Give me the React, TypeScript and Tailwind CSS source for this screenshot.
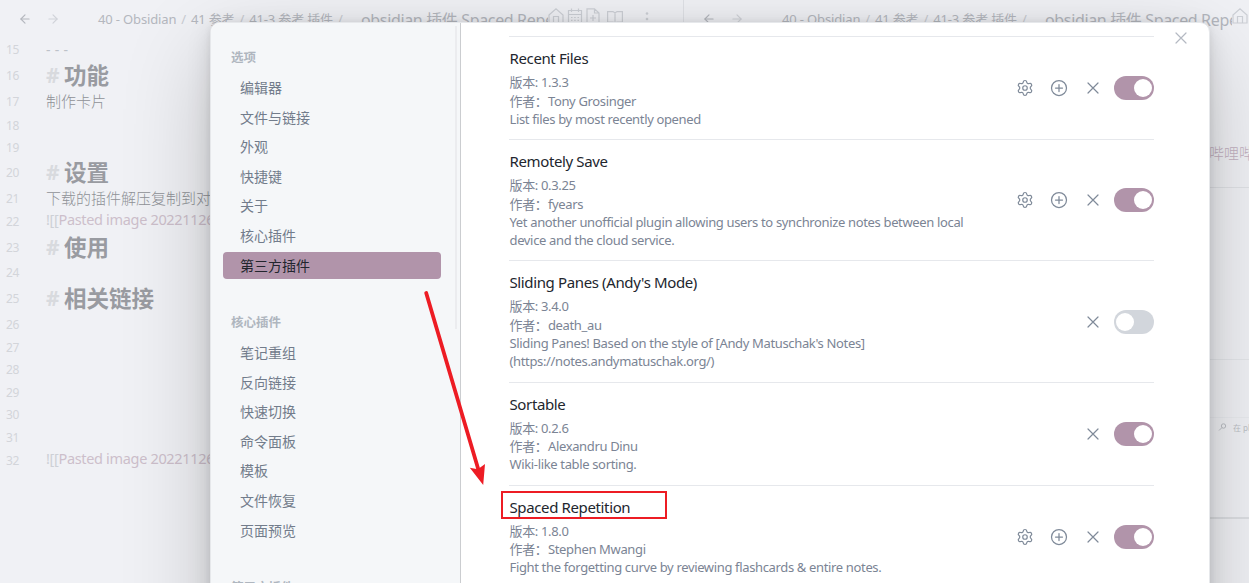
import React from "react";
import { ArrowLeft, ArrowRight, Settings } from "lucide-react";

type Line = { no: number; h: string; kind?: "dash" | "heading" | "text" | "embed"; text?: string };

const lines: Line[] = [
  { no: 15, h: "h-[26px]", kind: "dash", text: "---" },
  { no: 16, h: "h-[26px]", kind: "heading", text: "功能" },
  { no: 17, h: "h-[24px]", kind: "text", text: "制作卡片" },
  { no: 18, h: "h-[22px]" },
  { no: 19, h: "h-[25px]" },
  { no: 20, h: "h-[26px]", kind: "heading", text: "设置" },
  { no: 21, h: "h-[23px]", kind: "text", text: "下载的插件解压复制到对" },
  { no: 22, h: "h-[26px]", kind: "embed", text: "Pasted image 20221126" },
  { no: 23, h: "h-[25px]", kind: "heading", text: "使用" },
  { no: 24, h: "h-[26px]" },
  { no: 25, h: "h-[26px]", kind: "heading", text: "相关链接" },
  { no: 26, h: "h-[23px]" },
  { no: 27, h: "h-[22px]" },
  { no: 28, h: "h-[23px]" },
  { no: 29, h: "h-[22px]" },
  { no: 30, h: "h-[23px]" },
  { no: 31, h: "h-[23px]" },
  { no: 32, h: "h-[23px]", kind: "embed", text: "Pasted image 20221126" },
];

const HomeIcon = () => (
  <svg className="h-4 w-4 shrink-0" viewBox="0 0 16 16" fill="none" stroke="currentColor" strokeWidth="1.2">
    <path d="M1 7 8 .8 15 7v8H1zM5.5 15V8.5h5V15" />
  </svg>
);
const CalendarIcon = () => (
  <svg className="h-4 w-4 shrink-0" viewBox="0 0 16 16" fill="none" stroke="currentColor" strokeWidth="1.2">
    <path d="M1.5 2.5h13V15h-13zM1.5 6.5h13M4.5.5v3.500M11.500.5v3.500M4 9.500h1.500M7.200 9.500h1.500M10.500 9.500H12M4 12.300h1.500M7.200 12.300h1.500M10.500 12.300H12" />
  </svg>
);
const FilePlusIcon = () => (
  <svg className="h-4 w-4 shrink-0" viewBox="0 0 16 16" fill="none" stroke="currentColor" strokeWidth="1.2">
    <path d="M2 .8h7.500L14 5v10H2zM9.500.8V5H14M8 7v6M5 10h6" />
  </svg>
);
const BookIcon = () => (
  <svg className="h-4 w-4 shrink-0" viewBox="0 0 16 16" fill="none" stroke="currentColor" strokeWidth="1.2">
    <path d="M.6 3.600h5.400l2 1.400 2-1.400h5.400V14H10l-2 1-2-1H.6zM8 5v10" />
  </svg>
);
const DotsIcon = () => (
  <svg className="h-4 w-4 shrink-0" viewBox="0 0 16 16" fill="currentColor">
    <circle cx="8" cy="5.500" r="1.300" />
    <circle cx="8" cy="11" r="1.300" />
  </svg>
);
const Cross = () => (
  <svg className="h-4 w-4" viewBox="0 0 16 16" fill="none" stroke="currentColor" strokeWidth="1.2" strokeLinecap="round">
    <path d="m3 3 10 10M13 3 3 13" />
  </svg>
);
const PlusCircle = () => (
  <svg className="h-[18px] w-[18px]" viewBox="0 0 18 18" fill="none" stroke="currentColor" strokeWidth="1.25" strokeLinecap="round">
    <circle cx="9" cy="9" r="7.500" />
    <path d="M9 5.500v7M5.500 9h7" />
  </svg>
);

function PaneHeader({ full }: { full?: boolean }) {
  return (
    <div className="flex h-[38px] w-full items-center overflow-hidden text-[#b4b7be]">
      <ArrowLeft className="ml-[18px] h-[14px] w-[14px] shrink-0" strokeWidth={2} />
      <ArrowRight className="ml-[14px] h-[14px] w-[14px] shrink-0 text-[#d0d3d9]" strokeWidth={2} />
      <div className="ml-[38px] flex w-[263px] shrink-0 items-center gap-[5px] whitespace-nowrap pt-px text-[13px] tracking-[-0.15px]">
        <span>40 - Obsidian</span>
        <span className="text-[#c9ccd2]">/</span>
        <span>41 参考</span>
        <span className="text-[#c9ccd2]">/</span>
        <span>41-3 参考 插件</span>
        <span className="text-[#c9ccd2]">/</span>
      </div>
      <div className="w-[187px] shrink-0 overflow-hidden whitespace-nowrap pt-[2px] text-[16px] tracking-[-0.35px]">
        obsidian 插件 Spaced Repetition
      </div>
      <div className="flex shrink-0 items-center gap-[2.500px] pb-[6px] text-[#cdd0d6]">
        <HomeIcon />
        {full && (
          <>
            <CalendarIcon />
            <FilePlusIcon />
            <span className="w-[1px]" />
            <BookIcon />
            <span className="w-[11px]" />
            <DotsIcon />
          </>
        )}
      </div>
    </div>
  );
}

function EditorLine({ line }: { line: Line }) {
  return (
    <div className={`flex items-start ${line.h}`}>
      <div className="flex h-[23px] w-[46px] shrink-0 items-center pl-[6px] text-[12px] tracking-[-0.3px] text-[#d3d5da]">{line.no}</div>
      <div className="flex h-[22px] items-center whitespace-nowrap">
        {line.kind === "dash" && <span className="text-[14px] tracking-[4.200px] text-[#bdc2c9]">{line.text}</span>}
        {line.kind === "heading" && (
          <span className="flex items-center gap-[5px] pt-[2px] text-[22.500px] font-bold text-[#999ba1]">
            <span className="w-[13px] text-[21px] text-[#d8dade]">#</span>
            {line.text}
          </span>
        )}
        {line.kind === "text" && <span className="text-[15px] font-light text-[#8f9197]">{line.text}</span>}
        {line.kind === "embed" && (
          <span className="pb-[2px] text-[14.500px] tracking-[-0.330px] text-[#cdbfcb]">
            <span className="text-[#cdd0d6]">![[</span>
            {line.text}
          </span>
        )}
      </div>
    </div>
  );
}

const groups = [
  { title: "选项", items: ["编辑器", "文件与链接", "外观", "快捷键", "关于", "核心插件", "第三方插件"] },
  { title: "核心插件", items: ["笔记重组", "反向链接", "快速切换", "命令面板", "模板", "文件恢复", "页面预览"] },
  { title: "第三方插件", items: [] },
];

type Plugin = { name: string; version: string; author: string; desc: string[]; on: boolean; options: boolean; h: string; gap: string; marked?: boolean };

const plugins: Plugin[] = [
  { name: "Recent Files", version: "1.3.3", author: "Tony Grosinger", desc: ["List files by most recently opened"], on: true, options: true, h: "h-[103px]", gap: "mt-[4.4px]" },
  {
    name: "Remotely Save", version: "0.3.25", author: "fyears",
    desc: ["Yet another unofficial plugin allowing users to synchronize notes between local", "device and the cloud service."],
    on: true, options: true, h: "h-[121px]", gap: "mt-[4.4px]",
  },
  {
    name: "Sliding Panes (Andy's Mode)", version: "3.4.0", author: "death_au",
    desc: ["Sliding Panes! Based on the style of [Andy Matuschak's Notes]", "(https://notes.andymatuschak.org/)"],
    on: false, options: false, h: "h-[122px]", gap: "mt-[4.4px]",
  },
  { name: "Sortable", version: "0.2.6", author: "Alexandru Dinu", desc: ["Wiki-like table sorting."], on: true, options: false, h: "h-[103px]", gap: "mt-[4px]" },
  {
    name: "Spaced Repetition", version: "1.8.0", author: "Stephen Mwangi",
    desc: ["Fight the forgetting curve by reviewing flashcards & entire notes."],
    on: true, options: true, h: "h-[103px]", gap: "mt-[4px]", marked: true,
  },
];

function PluginRow({ p }: { p: Plugin }) {
  return (
    <div className={`flex shrink-0 items-center justify-between border-t border-[#e6e8ec] ${p.h}`}>
      <div className="flex h-full flex-col whitespace-nowrap pl-[0.5px] pt-[11px]">
        <div className="relative h-[21px] text-[15px] leading-[21px] tracking-[-0.37px] text-[#22262e]">
          {p.name}
          {p.marked && <span className="absolute -left-[8.5px] -top-[6px] h-[28px] w-[166px] border-2 border-[#ed1c24]" />}
        </div>
        <div className={`text-[13px] leading-[18.200px] tracking-[-0.35px] text-[#7b8494] ${p.gap}`}>
          <div>版本: {p.version}</div>
          <div>
            作者：<span className="ml-[0.5px]">{p.author}</span>
          </div>
          {p.desc.map((d) => (
            <div key={d}>{d}</div>
          ))}
        </div>
      </div>
      <div className="flex items-center text-[#7f8a99]">
        {p.options && (
          <>
            <Settings className="mr-[16px] h-[18px] w-[18px]" strokeWidth={1.6} />
            <span className="mr-[17px]">
              <PlusCircle />
            </span>
          </>
        )}
        <Cross />
        <span className={`ml-[13px] flex h-[24px] w-[40px] items-center rounded-full px-[2px] ${p.on ? "justify-end bg-[#b194aa]" : "justify-start bg-[#d2d6dc]"}`}>
          <span className="h-[18px] w-[18px] rounded-full bg-white" />
        </span>
      </div>
    </div>
  );
}

export default function App() {
  return (
    <div className="relative h-[583px] w-[1249px] overflow-hidden bg-[#f0f1f5] font-['Noto_Sans','Noto_Sans_CJK_SC',sans-serif]">
      <div className="flex h-full">
        <div className="w-[684px] shrink-0 border-r border-[#dfe1e6]">
          <PaneHeader full />
          {lines.map((l) => (
            <EditorLine key={l.no} line={l} />
          ))}
        </div>
        <div className="flex min-w-0 flex-1 flex-col overflow-hidden">
          <PaneHeader />
          <div className="flex h-[150px] items-end border-b border-[#e0e2e6] pb-[23px] pl-[525px]">
            <span className="whitespace-nowrap text-[15px] font-light leading-[22px] text-[#c4b2c1]">哔哩哔</span>
          </div>
          <div className="h-[172px] shrink-0 border-b border-[#e4e6ea]" />
          <div className="h-[58px] shrink-0 border-b border-[#e9ebef]" />
          <div className="flex h-[101px] shrink-0 items-start border-b-2 border-[#dcdee2] pl-[534px] pt-[3px] text-[#bcbfc5]">
            <svg className="mt-[2px] h-[9px] w-[9px] shrink-0" viewBox="0 0 9 9" fill="none" stroke="currentColor">
              <circle cx="5.500" cy="3" r="2.200" />
              <path d="M4 4.500 1 7.500" />
            </svg>
            <span className="ml-[6px] whitespace-nowrap text-[8px] leading-[13px]">在 pl</span>
          </div>
        </div>
      </div>

      <div className="absolute left-[210px] top-[22px] flex h-[640px] w-[1000px] overflow-visible rounded-[10px] border border-[#e6e8eb] bg-white shadow-[0_1.8px_7.3px_rgba(0,0,0,0.071),0_6.3px_24.7px_rgba(0,0,0,0.112),0_30px_90px_rgba(0,0,0,0.2)]">
        <div className="flex w-[250px] shrink-0 justify-between rounded-l-[9px] border-r border-[#cbcdd0] bg-[#f5f7f9]">
          <div className="ml-[12px] w-[218px] pt-[21px]">
            {groups.map((g) => (
              <div key={g.title} className="mb-[30.400px]">
                <div className="mb-[3px] h-[24px] pl-[8px] pt-[2px] text-[12.500px] font-bold leading-[24px] text-[#afb6bf]">{g.title}</div>
                <div className="flex flex-col gap-[2.620px] pt-[3px]">
                  {g.items.map((it) => (
                    <div
                      key={it}
                      className={`h-[27px] rounded-[4px] pl-[17px] text-[14px] leading-[27px] ${it === "第三方插件" ? "bg-[#b194aa] text-[#22262e]" : "text-[#727c8b]"}`}
                    >
                      {it}
                    </div>
                  ))}
                </div>
              </div>
            ))}
          </div>
          <div className="mr-[3px] mt-[3px] h-[303px] w-[2px] bg-[#ebecef]" />
        </div>
        <div className="flex w-[693px] flex-col pl-[48px] pt-[13px]">
          {plugins.map((p) => (
            <PluginRow key={p.name} p={p} />
          ))}
        </div>
        <div className="pl-[18.500px] pt-[7px] text-[#b4b9c2]">
          <Cross />
        </div>
      </div>

      <svg className="absolute left-[415px] top-[285px] h-[210px] w-[80px]" viewBox="415 285 80 210" fill="#ed1c24">
        <path d="M426.200 293 478.500 470" stroke="#ed1c24" strokeWidth="3.800" strokeLinecap="round" />
        <path d="m483.200 485-13.400-17.200 8 1.400 7.200-5.200z" />
      </svg>
    </div>
  );
}
